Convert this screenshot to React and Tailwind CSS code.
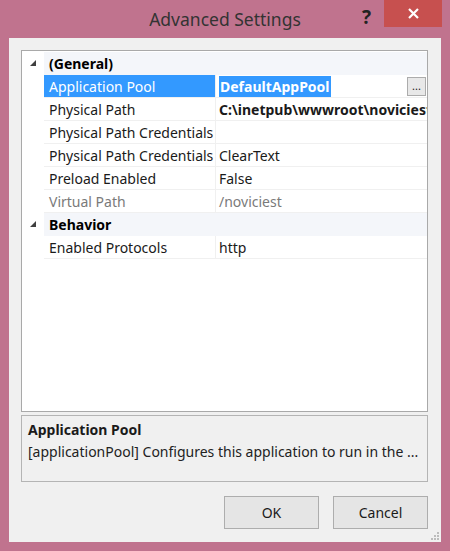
import React from "react";

const font = { fontFamily: '"Noto Sans", "Open Sans", sans-serif' };

const rows = [
  { type: "cat", label: "(General)" },
  { label: "Application Pool", value: "DefaultAppPool", selected: true, bold: true },
  { label: "Physical Path", value: "C:\\inetpub\\wwwroot\\noviciest", bold: true },
  { label: "Physical Path Credentials", value: "" },
  { label: "Physical Path Credentials", value: "ClearText" },
  { label: "Preload Enabled", value: "False" },
  { label: "Virtual Path", value: "/noviciest", muted: true },
  { type: "cat", label: "Behavior" },
  { label: "Enabled Protocols", value: "http" },
];

const Row = ({ row }) => {
  if (row.type === "cat") {
    return (
      <div className="flex h-[23px] items-center">
        <div className="w-[22px] h-full flex items-center justify-center">
          <svg width="7" height="7" viewBox="0 0 7 7">
            <polygon points="6,0 6,6 0,6" fill="#404040" />
          </svg>
        </div>
        <div className="flex-1 h-full flex items-center pl-[5px] bg-[#f4f6fa] font-bold text-[#000]">
          {row.label}
        </div>
      </div>
    );
  }
  return (
    <div className="flex h-[23px]">
      <div className="w-[22px] h-full" />
      <div
        className={
          "w-[171px] h-full flex items-center pl-[5px] border-b border-[#f0f0f0] whitespace-nowrap overflow-hidden " +
          (row.selected ? "bg-[#3399ff] text-white" : row.muted ? "text-[#7a7a7a]" : "text-[#1a1a1a]")
        }
      >
        {row.label}
      </div>
      <div className="w-px h-full bg-[#f0f0f0]" />
      <div className="flex-1 h-full flex items-center pl-[3px] border-b border-[#f0f0f0] whitespace-nowrap overflow-hidden relative">
        <span
          className={
            (row.bold ? "font-bold " : "") +
            (row.selected ? "bg-[#3399ff] text-white px-[1px] " : row.muted ? "text-[#7a7a7a] " : "text-[#1a1a1a] ")
          }
        >
          {row.value}
        </span>
        {row.selected && (
          <div className="absolute right-[1px] top-[2px] w-[19px] h-[19px] border border-[#acacac] bg-[#e8e8e8] flex items-end justify-center pb-[4px] text-[11px] leading-none text-[#222]">
            ...
          </div>
        )}
      </div>
    </div>
  );
};

export default function App() {
  return (
    <div className="w-[450px] h-[551px] bg-[#c0738e] flex flex-col overflow-hidden" style={font}>
      <div className="h-[38px] relative flex items-center justify-center">
        <span className="text-[17.5px] text-[#333] mt-[1px]">Advanced Settings</span>
        <span className="absolute left-[362px] top-[3px] text-[19px] font-bold text-[#222]">?</span>
        <div className="absolute left-[384px] top-0 w-[58px] h-[27px] bg-[#c7504f] flex items-center justify-center">
          <svg width="11" height="11" viewBox="0 0 11 11">
            <path d="M1 1 L10 10 M10 1 L1 10" stroke="white" strokeWidth="2.2" />
          </svg>
        </div>
      </div>
      <div className="mx-[9px] mb-[9px] flex-1 bg-[#f0f0f0] flex flex-col pt-[12px] pl-[12px] pr-[13px] pb-[13px] text-[14px] text-[#1a1a1a] relative">
        <div className="h-[362px] border border-[#a9a9a9] bg-white overflow-hidden pt-[1px]">
          {rows.map((r, i) => (
            <Row key={i} row={r} />
          ))}
        </div>
        <div className="mt-[3px] h-[67px] border border-[#b4b4b4] pl-[6px] pt-[3px] overflow-hidden">
          <div className="font-bold leading-[22px]">Application Pool</div>
          <div className="leading-[22px] text-[#222] whitespace-nowrap">[applicationPool] Configures this application to run in the ...</div>
        </div>
        <div className="mt-[14px] flex justify-end gap-[14px]">
          <button className="w-[95px] h-[33px] border border-[#adadad] bg-[#e5e5e5] text-[#1a1a1a]">OK</button>
          <button className="w-[95px] h-[33px] border border-[#adadad] bg-[#e5e5e5] text-[#1a1a1a]">Cancel</button>
        </div>
        <svg className="absolute right-[1px] bottom-[1px]" width="10" height="10" viewBox="0 0 10 10">
          <rect x="7" y="1" width="2" height="2" fill="#bcbcbc" />
          <rect x="4" y="4" width="2" height="2" fill="#bcbcbc" />
          <rect x="7" y="4" width="2" height="2" fill="#bcbcbc" />
          <rect x="1" y="7" width="2" height="2" fill="#bcbcbc" />
          <rect x="4" y="7" width="2" height="2" fill="#bcbcbc" />
          <rect x="7" y="7" width="2" height="2" fill="#bcbcbc" />
        </svg>
      </div>
    </div>
  );
}
